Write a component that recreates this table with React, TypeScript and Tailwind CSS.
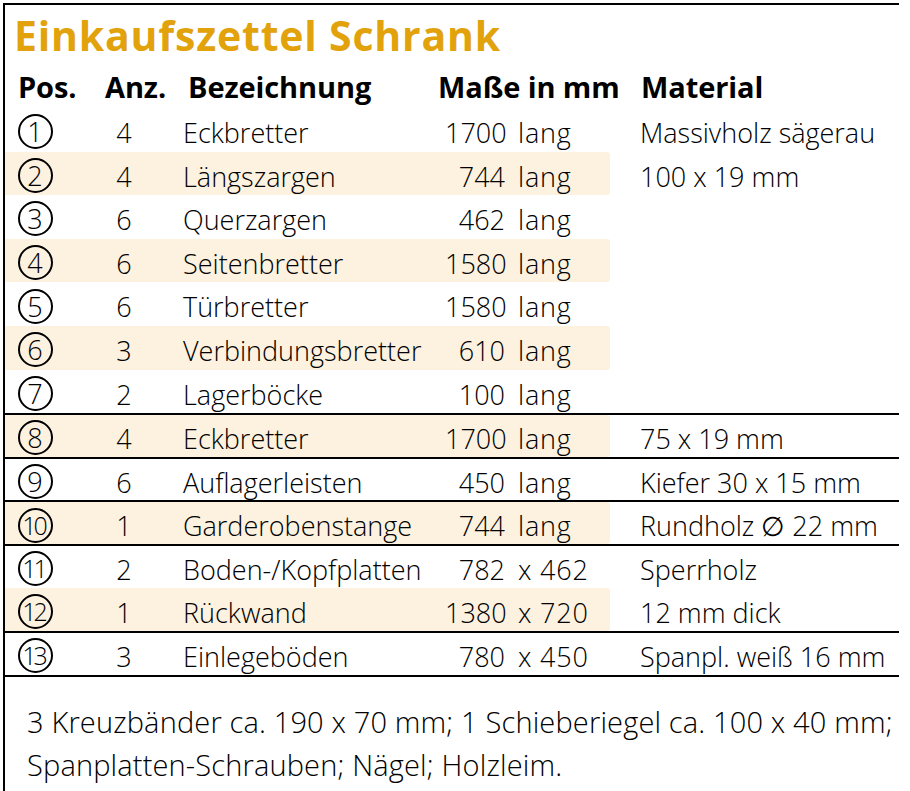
const rows = [
  { pos: "1", anz: "4", name: "Eckbretter", num: "1700", rest: "lang", mat: "Massivholz sägerau" },
  { pos: "2", anz: "4", name: "Längszargen", num: "744", rest: "lang", mat: "100 x 19 mm" },
  { pos: "3", anz: "6", name: "Querzargen", num: "462", rest: "lang", mat: "" },
  { pos: "4", anz: "6", name: "Seitenbretter", num: "1580", rest: "lang", mat: "" },
  { pos: "5", anz: "6", name: "Türbretter", num: "1580", rest: "lang", mat: "" },
  { pos: "6", anz: "3", name: "Verbindungsbretter", num: "610", rest: "lang", mat: "" },
  { pos: "7", anz: "2", name: "Lagerböcke", num: "100", rest: "lang", mat: "" },
  { pos: "8", anz: "4", name: "Eckbretter", num: "1700", rest: "lang", mat: "75 x 19 mm", line: true },
  { pos: "9", anz: "6", name: "Auflagerleisten", num: "450", rest: "lang", mat: "Kiefer 30 x 15 mm", line: true },
  { pos: "10", anz: "1", name: "Garderobenstange", num: "744", rest: "lang", mat: "Rundholz ∅ 22 mm", line: true },
  { pos: "11", anz: "2", name: "Boden-/Kopfplatten", num: "782", rest: "x 462", mat: "Sperrholz", line: true },
  { pos: "12", anz: "1", name: "Rückwand", num: "1380", rest: "x 720", mat: "12 mm dick" },
  { pos: "13", anz: "3", name: "Einlegeböden", num: "780", rest: "x 450", mat: "Spanpl. weiß 16 mm", line: true },
];

const Circled = ({ n }: { n: string }) => (
  <div className="w-[35px] h-[35px] rounded-full border-2 border-black flex items-center justify-center">
    <span
      className={`leading-none font-light ${n.length > 1 ? "text-[25px] tracking-[-3px] -ml-[3px]" : "text-[27px]"}`}
    >
      {n}
    </span>
  </div>
);

export default function App() {
  return (
    <div
      className="w-[910px] h-[791px] bg-white overflow-hidden pt-[3px] pl-[3px] text-black"
      style={{ fontFamily: '"Open Sans", "Liberation Sans", sans-serif' }}
    >
      <div className="w-[896px] border-l-2 border-t-2 border-black">
        <div className="h-[59px] pl-[9px] pt-[5px] text-[41px] leading-[50px] font-bold tracking-[0.8px] text-[#e2a20c]">
          Einkaufszettel Schrank
        </div>

        <div className="h-[44px] flex items-center text-[29px] font-bold leading-none tracking-[-0.1px]">
          <span className="ml-[13px] w-[87px]">Pos.</span>
          <span className="w-[83px]">Anz.</span>
          <span className="w-[250px]">Bezeichnung</span>
          <span className="w-[203px]">Maße in mm</span>
          <span>Material</span>
        </div>

        {rows.map((r, i) => (
          <div
            key={r.pos}
            className={`h-[43.6px] flex items-stretch text-[27px] font-light ${r.line ? "border-t-2 border-black" : ""}`}
          >
            <div
              className={`w-[605px] flex items-center pt-[7px] rounded-r-[3px] ${i % 2 === 1 ? "bg-[#fdf1df]" : ""}`}
            >
              <div className="w-[60px] flex justify-center -mt-[3px]">
                <Circled n={r.pos} />
              </div>
              <div className="w-[118px] text-center">{r.anz}</div>
              <div className="w-[262px] whitespace-nowrap">{r.name}</div>
              <div className="flex whitespace-nowrap">
                <span className="w-[60px] text-right">{r.num}</span>
                <span className="ml-[13px] tracking-[0.8px]">{r.rest}</span>
              </div>
            </div>
            <div className="ml-[30px] pt-[7px] flex items-center whitespace-nowrap">{r.mat}</div>
          </div>
        ))}

        <div className="border-t-2 border-black pt-[23px] pl-[22px] text-[29px] font-light leading-[43px] tracking-[0.15px] h-[120px] whitespace-nowrap">
          <p>3 Kreuzbänder ca. 190 x 70 mm; 1 Schieberiegel ca. 100 x 40 mm;</p>
          <p>Spanplatten-Schrauben; Nägel; Holzleim.</p>
        </div>
      </div>
    </div>
  );
}
